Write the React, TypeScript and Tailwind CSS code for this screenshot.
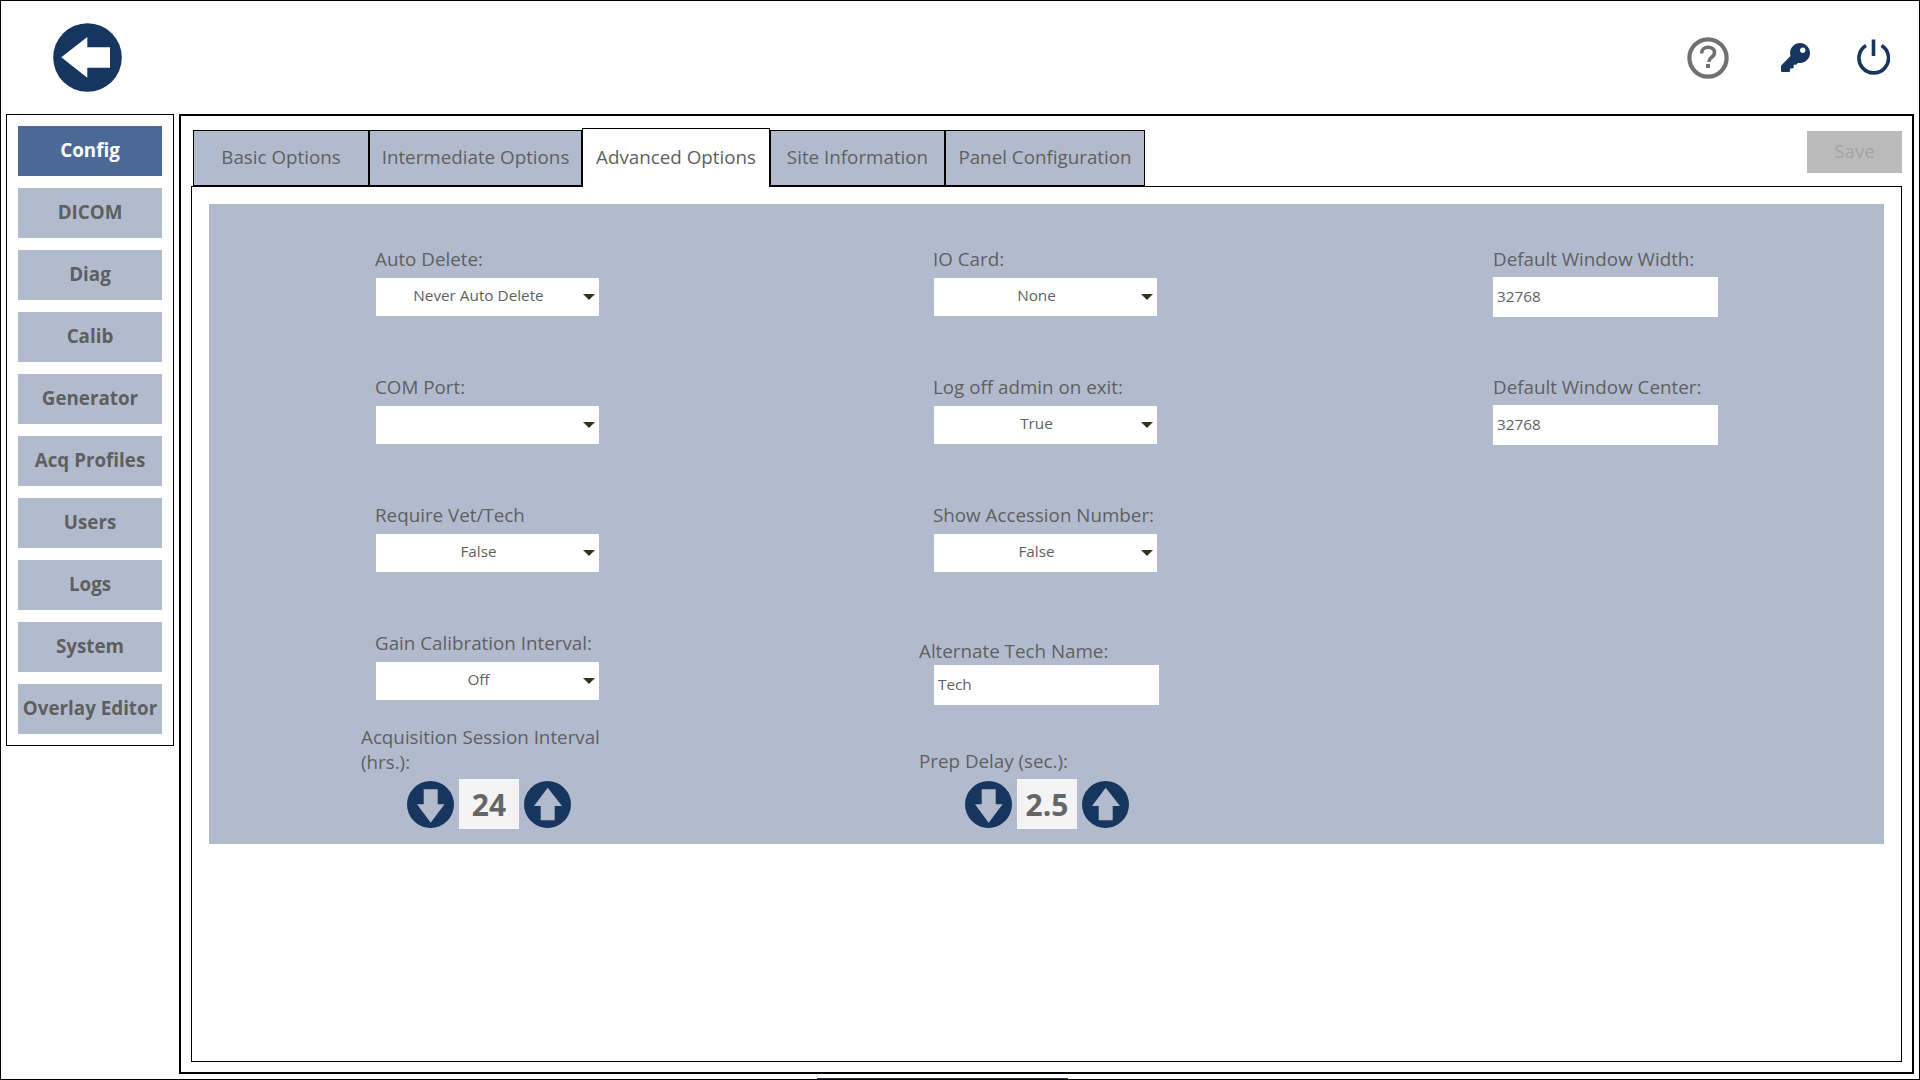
import React from "react";
import { FaKey } from "react-icons/fa";

const NAVY = "#163660";
const nav = ["Config", "DICOM", "Diag", "Calib", "Generator", "Acq Profiles", "Users", "Logs", "System", "Overlay Editor"];

function Select({ value }: { value: string }) {
  return (
    <div className="relative flex h-[38px] w-[223px] items-center justify-center bg-white pb-[4px] pr-[18px] text-[15.3px] text-[#5f5f5f]">
      {value}
      <span className="absolute right-[4px] top-[16px] h-0 w-0 border-x-[6px] border-t-[6px] border-x-transparent border-t-[#3a3020]" />
    </div>
  );
}

function Field({ label, value }: { label: string; value: string }) {
  return (
    <div className="flex h-[128px] flex-col pl-[15px]">
      <div className="-ml-px mb-[6px] h-[26px] whitespace-nowrap text-[18.8px] leading-[26px] text-[#5f5f5f]">{label}</div>
      <Select value={value} />
    </div>
  );
}

function Arrow({ up }: { up?: boolean }) {
  return (
    <svg width="47" height="47" viewBox="0 0 47 47" className="shrink-0">
      <circle cx="23.5" cy="23.5" r="23.5" fill={NAVY} />
      <polygon
        fill="#b2bbce"
        points={up ? "23.7,6.7 38,25 30.7,25 30.7,39.3 16.7,39.3 16.7,25 10,25" : "23.7,41.7 37.5,23.3 30.7,23.3 30.7,8.3 16.7,8.3 16.7,23.3 10,23.3"}
      />
    </svg>
  );
}

function Stepper({ value }: { value: string }) {
  return (
    <div className="ml-[46px] flex items-center gap-[5px]">
      <Arrow />
      <div className="flex h-[50px] w-[60px] items-center justify-center bg-[#f4f4f4] text-[30px] font-bold text-[#666]">{value}</div>
      <Arrow up />
    </div>
  );
}

function TextBox({ value, className }: { value: string; className: string }) {
  return (
    <input
      readOnly
      value={value}
      className={`block bg-white px-[4px] pb-[3px] text-[15.3px] text-[#5f5f5f] outline-none ${className}`}
    />
  );
}

function Tab({ label, width, active }: { label: string; width: string; active?: boolean }) {
  return (
    <div
      className={
        active
          ? `relative z-10 -mb-px flex h-[59px] items-center justify-center whitespace-nowrap border border-b-0 border-black bg-white pb-[2px] text-[18.8px] text-[#5f5f5f] ${width}`
          : `flex h-[56px] items-center justify-center whitespace-nowrap border border-black bg-[#b2bbce] pb-[2px] text-[18.8px] text-[#5f5f5f] ${width}`
      }
    >
      {label}
    </div>
  );
}

export default function App() {
  return (
    <div
      className="relative flex h-[1080px] w-[1920px] flex-col overflow-hidden border border-black bg-white"
      style={{ fontFamily: '"Open Sans", "Noto Sans", sans-serif' }}
    >
      <header className="flex h-[113px] shrink-0 items-center pl-[52px] pr-[29px]">
        <svg width="69" height="69" viewBox="0 0 69 69">
          <circle cx="34.5" cy="34.5" r="34.3" fill={NAVY} />
          <polygon fill="#fff" points="8.3,34.3 34.3,14 34.3,24.3 57,24.3 57,44.7 34.3,44.7 34.3,54.7" />
        </svg>
        <svg width="42" height="42" viewBox="0 0 42 42" className="ml-auto translate-x-[1px]">
          <circle cx="21" cy="21" r="18.6" fill="none" stroke="#707070" strokeWidth="4.2" />
          <path d="M14.6 16.4c0-3.8 2.9-6.2 6.6-6.2 3.6 0 6.3 2.2 6.3 5.4 0 2.5-1.5 3.8-3.1 5-1.6 1.1-2.4 1.9-2.4 3.8v.6" fill="none" stroke="#707070" strokeWidth="3.6" />
          <rect x="19" y="27" width="4" height="4" fill="#707070" />
        </svg>
        <FaKey className="ml-[53px]" size={29} color={NAVY} />
        <svg width="33" height="38" viewBox="0 0 33 38" className="ml-[47px] mt-[1px]">
          <path d="M9 6.5a14.8 14.8 0 1 0 15.5 0" fill="none" stroke={NAVY} strokeWidth="3.6" />
          <path d="M16.5 0.5V17" fill="none" stroke={NAVY} strokeWidth="3.6" />
        </svg>
      </header>

      <div className="flex min-h-0 flex-1 items-start pl-[5px]">
        <nav className="flex w-[168px] flex-col gap-[12px] border border-black p-[11px]">
          {nav.map((n) => (
            <div
              key={n}
              className={`flex h-[50px] items-center justify-center whitespace-nowrap pb-[2px] text-[18.8px] font-bold ${
                n === "Config" ? "bg-[#4c6995] text-white" : "bg-[#b2bbce] text-[#5f5f5f]"
              }`}
            >
              {n}
            </div>
          ))}
        </nav>

        <main className="ml-[5px] h-[960px] w-[1735px] border-2 border-black">
          <div className="flex h-[70px] items-end pl-[12px] pr-[10px]">
            <Tab label="Basic Options" width="w-[176px]" />
            <Tab label="Intermediate Options" width="w-[213px]" />
            <Tab label="Advanced Options" width="w-[188px]" active />
            <Tab label="Site Information" width="w-[175px]" />
            <Tab label="Panel Configuration" width="w-[200px]" />
            <button className="mb-[13px] ml-auto flex h-[42px] w-[95px] items-center justify-center bg-[#bbbbbb] pb-[2px] text-[18.8px] text-[#a3a3a3]">
              Save
            </button>
          </div>
          <section className="ml-[10px] h-[876px] w-[1711px] border border-black p-[17px]">
            <div className="grid h-[640px] grid-cols-[558px_574px_1fr] bg-[#b2bbce] pl-[152px] pt-[42px]">
              <div className="flex flex-col">
                <Field label="Auto Delete:" value="Never Auto Delete" />
                <Field label="COM Port:" value="" />
                <Field label="Require Vet/Tech" value="False" />
                <div className="h-[95px]">
                  <div className="flex flex-col pl-[15px]">
                    <div className="-ml-px mb-[6px] h-[26px] whitespace-nowrap text-[18.8px] leading-[26px] text-[#5f5f5f]">Gain Calibration Interval:</div>
                    <Select value="Off" />
                  </div>
                </div>
                <div className="mb-[5px] w-[250px] text-[18.8px] leading-[24.5px] text-[#5f5f5f]">Acquisition Session Interval (hrs.):</div>
                <Stepper value="24" />
              </div>

              <div className="flex flex-col">
                <Field label="IO Card:" value="None" />
                <Field label="Log off admin on exit:" value="True" />
                <Field label="Show Accession Number:" value="False" />
                <div className="mt-[8px] h-[27px] text-[18.8px] leading-[26px] text-[#5f5f5f]">Alternate Tech Name:</div>
                <TextBox value="Tech" className="ml-[15px] h-[40px] w-[225px]" />
                <div className="mb-[5px] mt-[43px] h-[26px] text-[18.8px] leading-[26px] text-[#5f5f5f]">Prep Delay (sec.):</div>
                <Stepper value="2.5" />
              </div>

              <div className="flex flex-col">
                <div className="h-[128px]">
                  <div className="mb-[5px] h-[26px] whitespace-nowrap text-[18.8px] leading-[26px] text-[#5f5f5f]">Default Window Width:</div>
                  <TextBox value="32768" className="h-[40px] w-[225px]" />
                </div>
                <div>
                  <div className="mb-[5px] h-[26px] whitespace-nowrap text-[18.8px] leading-[26px] text-[#5f5f5f]">Default Window Center:</div>
                  <TextBox value="32768" className="h-[40px] w-[225px]" />
                </div>
              </div>
            </div>
          </section>
        </main>
      </div>
      <div className="absolute bottom-[-1px] left-[816px] h-[2px] w-[251px] bg-[#2d3a4a]" />
    </div>
  );
}
